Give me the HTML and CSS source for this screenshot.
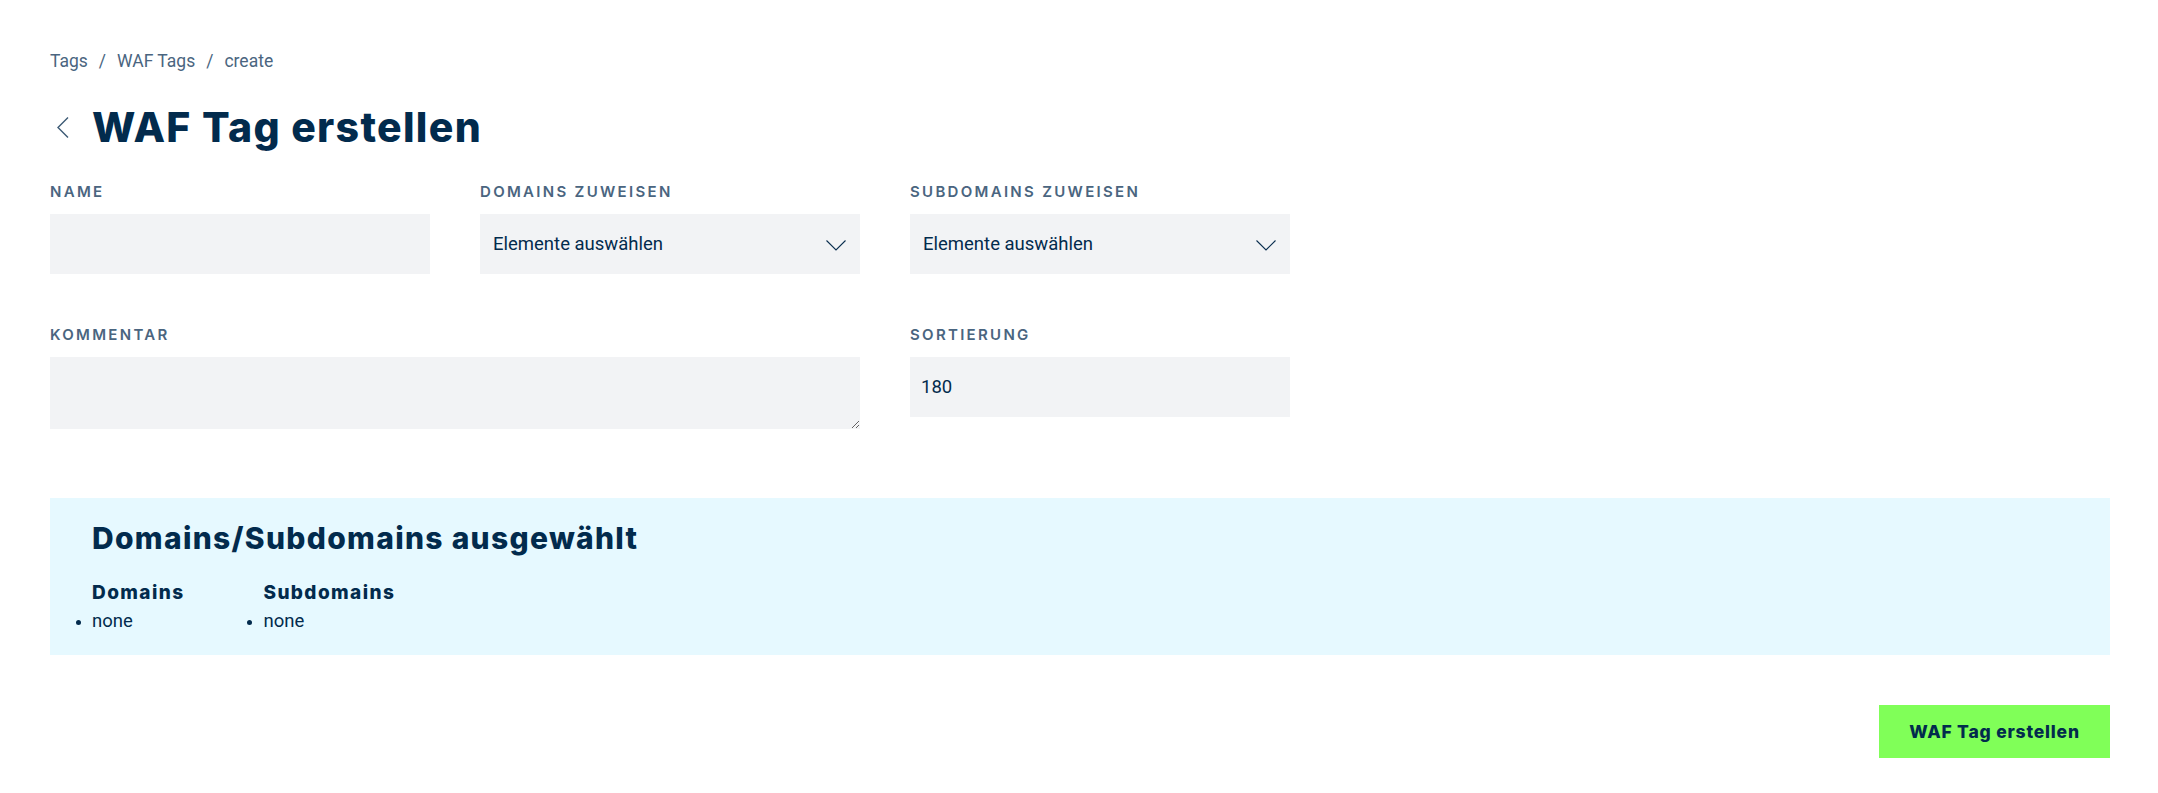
FILE: index.html
```html
<!DOCTYPE html>
<html lang="de">
<head>
<meta charset="utf-8">
<title>WAF Tag erstellen</title>
<link rel="stylesheet" href="styles.css">
</head>
<body>
<main class="page">
  <nav class="breadcrumb">
    <a href="#">Tags</a><span class="sep">/</span><a href="#">WAF Tags</a><span class="sep">/</span><span>create</span>
  </nav>

  <div class="title-row">
    <a href="#" class="back" aria-label="zurück">
      <svg width="14" height="23" viewBox="0 0 14 23"><polyline points="12,1.5 2,11.5 12,21.5" fill="none" stroke="#3d5a75" stroke-width="1.4"/></svg>
    </a>
    <h1>WAF Tag erstellen</h1>
  </div>

  <form class="form-grid">
    <div class="field">
      <label class="label">Name</label>
      <input class="control" type="text">
    </div>
    <div class="field">
      <label class="label">Domains zuweisen</label>
      <div class="control select"><span>Elemente auswählen</span>
        <svg width="20" height="11" viewBox="0 0 20 11"><polyline points="0.5,0.5 10,10 19.5,0.5" fill="none" stroke="#0b2f4f" stroke-width="1.1"/></svg>
      </div>
    </div>
    <div class="field">
      <label class="label">Subdomains zuweisen</label>
      <div class="control select"><span>Elemente auswählen</span>
        <svg width="20" height="11" viewBox="0 0 20 11"><polyline points="0.5,0.5 10,10 19.5,0.5" fill="none" stroke="#0b2f4f" stroke-width="1.1"/></svg>
      </div>
    </div>
    <div class="field span2">
      <label class="label">Kommentar</label>
      <textarea class="control textarea"></textarea>
    </div>
    <div class="field">
      <label class="label">Sortierung</label>
      <input class="control" type="text" value="180">
    </div>
  </form>

  <section class="selected">
    <h2>Domains/Subdomains ausgewählt</h2>
    <div class="lists">
      <div class="list">
        <h3>Domains</h3>
        <ul><li>none</li></ul>
      </div>
      <div class="list">
        <h3>Subdomains</h3>
        <ul><li>none</li></ul>
      </div>
    </div>
  </section>

  <div class="actions">
    <button class="btn" type="button">WAF Tag erstellen</button>
  </div>
</main>
</body>
</html>
```

FILE: styles.css
```css
* { box-sizing: border-box; }

html, body {
  margin: 0;
  padding: 0;
  background: #ffffff;
}

body {
  font-family: Roboto, "Liberation Sans", sans-serif;
  color: #022b4d;
}

.page {
  width: 2110px;
  padding: 49px 0 40px 50px;
}

.breadcrumb {
  font-size: 17.5px;
  line-height: 24px;
  color: #4a6580;
  display: flex;
  align-items: center;
}
.breadcrumb a { color: inherit; text-decoration: none; }
.breadcrumb .sep { margin: 0 11px; }

.title-row {
  display: flex;
  align-items: center;
  margin-top: 29px;
  height: 50px;
}
.back {
  display: flex;
  width: 42px;
  padding-left: 6px;
}
.title-row h1 {
  margin: 0;
  font-family: Inter, "Noto Sans", sans-serif;
  font-weight: 800;
  font-size: 41px;
  letter-spacing: 1.3px;
  line-height: 50px;
  color: #022b4d;
}

.form-grid {
  display: grid;
  grid-template-columns: repeat(3, 380px);
  column-gap: 50px;
  row-gap: 51px;
  margin-top: 30px;
  align-items: start;
}
.field {
  display: flex;
  flex-direction: column;
  gap: 12px;
}
.span2 { grid-column: span 2; }

.label {
  font-family: Inter, "Noto Sans", sans-serif;
  font-weight: 600;
  font-size: 15px;
  line-height: 20px;
  letter-spacing: 2.3px;
  text-transform: uppercase;
  color: #4a6580;
}

.control {
  height: 60px;
  width: 100%;
  background: #f2f3f5;
  border: 0;
  outline: 0;
  padding: 0 13px;
  font-family: Roboto, "Liberation Sans", sans-serif;
  font-size: 18.5px;
  color: #022b4d;
}
input.control { padding-left: 11px; }

.select {
  display: flex;
  align-items: center;
  justify-content: space-between;
  padding-right: 14px;
}
.select svg { margin-top: 2px; }

.textarea {
  height: 72px;
  resize: vertical;
  padding: 12px 13px;
  display: block;
}

.selected {
  margin-top: 69px;
  background: #e6f9ff;
  padding: 20px 42px 22px;
  height: 157px;
}
.selected h2 {
  margin: 0;
  font-family: Inter, "Noto Sans", sans-serif;
  font-weight: 800;
  font-size: 30px;
  line-height: 40px;
  letter-spacing: 1.3px;
  color: #022b4d;
}
.lists {
  display: flex;
  gap: 79px;
  margin-top: 23px;
}
.list h3 {
  margin: 0;
  font-family: Inter, "Noto Sans", sans-serif;
  font-weight: 800;
  font-size: 19px;
  line-height: 24px;
  letter-spacing: 1.4px;
  color: #022b4d;
}
.list ul {
  margin: 4px 0 0;
  padding-left: 0;
  list-style: none;
}
.list li {
  font-size: 18.5px;
  line-height: 24px;
  color: #022b4d;
  position: relative;
}
.list li::before {
  content: "";
  position: absolute;
  left: -16px;
  top: 11px;
  width: 5px;
  height: 5px;
  border-radius: 50%;
  background: #022b4d;
}

.actions {
  display: flex;
  justify-content: flex-end;
  margin-top: 50px;
}
.btn {
  width: 231px;
  height: 53px;
  background: #80ff58;
  border: 0;
  font-family: Inter, "Noto Sans", sans-serif;
  font-weight: 800;
  font-size: 17.5px;
  letter-spacing: 0.8px;
  color: #022b4d;
  cursor: pointer;
}
```
